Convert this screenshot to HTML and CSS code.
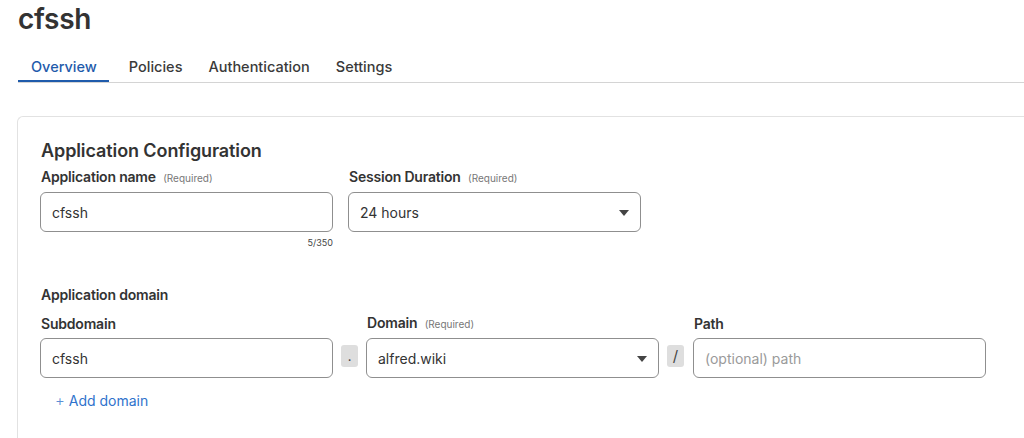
FILE: index.html
```html
<!DOCTYPE html>
<html>
<head>
<meta charset="utf-8">
<link rel="stylesheet" href="styles.css">
</head>
<body>
<div class="page">
  <h1 class="title">cfssh</h1>
  <nav class="tabs">
    <a class="tab active">Overview</a>
    <a class="tab">Policies</a>
    <a class="tab">Authentication</a>
    <a class="tab">Settings</a>
  </nav>
  <section class="card">
    <h2 class="card-title">Application Configuration</h2>
    <div class="row">
      <div class="field">
        <label class="label">Application name <span class="req">(Required)</span></label>
        <div class="input"><span class="value">cfssh</span></div>
        <div class="counter">5/350</div>
      </div>
      <div class="field">
        <label class="label">Session Duration <span class="req">(Required)</span></label>
        <div class="input select"><span class="value">24 hours</span><span class="caret"></span></div>
      </div>
    </div>
    <div class="group-title">Application domain</div>
    <div class="domain-row">
      <div class="field">
        <label class="label">Subdomain</label>
        <div class="input"><span class="value">cfssh</span></div>
      </div>
      <div class="sep">.</div>
      <div class="field">
        <label class="label">Domain <span class="req">(Required)</span></label>
        <div class="input select"><span class="value">alfred.wiki</span><span class="caret"></span></div>
      </div>
      <div class="sep slash">/</div>
      <div class="field">
        <label class="label">Path</label>
        <div class="input"><span class="placeholder">(optional) path</span></div>
      </div>
    </div>
    <a class="add-link"><span class="plus">+</span> Add domain</a>
  </section>
</div>
</body>
</html>
```
FILE: styles.css
```css
html, body {
  margin: 0;
  padding: 0;
  background: #ffffff;
  overflow: hidden;
}
body {
  font-family: Inter, "Helvetica Neue", Arial, sans-serif;
  color: #333333;
}
.page {
  padding-left: 17px;
}
.title {
  margin: 0 0 0 1px;
  padding-top: 2px;
  font-size: 28px;
  line-height: 34px;
  font-weight: 600;
  color: #333;
  letter-spacing: -0.3px;
}
.tabs {
  display: flex;
  margin-top: 15px;
  margin-left: 1px;
  border-bottom: 1px solid #d4d4d4;
  height: 31px;
}
.tab {
  display: block;
  font-size: 14.5px;
  font-weight: 500;
  color: #3a3a3a;
  padding: 0 13px;
  line-height: 31px;
  height: 30px;
}
.tab.active {
  color: #1f5bab;
  padding: 0 12px 0 13px;
  margin-right: 7px;
  border-bottom: 2px solid #1f5bab;
  height: 29px;
  margin-bottom: -1px;
}
.card {
  margin-top: 33px;
  border: 1px solid #e2e2e2;
  border-right: none;
  border-radius: 6px 0 0 0;
  padding: 22px 0 24px 22px;
  min-height: 400px;
}
.card-title {
  margin: 0 0 0 1px;
  font-size: 18px;
  line-height: 24px;
  font-weight: 600;
  color: #333;
  letter-spacing: -0.1px;
}
.row {
  display: flex;
  gap: 15px;
  margin-top: 5px;
}
.field {
  width: 293px;
  display: flex;
  flex-direction: column;
}
.label {
  display: block;
  margin-left: 1px;
  font-size: 14px;
  line-height: 18px;
  font-weight: 600;
  color: #333;
  margin-bottom: 5px;
  letter-spacing: -0.2px;
  white-space: nowrap;
}
.req {
  font-size: 10px;
  font-weight: 400;
  color: #777;
  margin-left: 4px;
  letter-spacing: 0;
}
.input {
  box-sizing: border-box;
  height: 40px;
  border: 1px solid #8f8f8f;
  border-radius: 6px;
  display: flex;
  align-items: center;
  padding: 0 11px;
  font-size: 14px;
  color: #333;
}
.select {
  justify-content: space-between;
  padding-right: 11px;
}
.caret {
  width: 0;
  height: 0;
  border-left: 5px solid transparent;
  border-right: 5px solid transparent;
  border-top: 6px solid #444;
  margin-top: 1px;
}
.placeholder {
  color: #9a9a9a;
}
.counter {
  text-align: right;
  font-size: 9px;
  line-height: 12px;
  margin-top: 5px;
  color: #444;
}
.group-title {
  margin-top: 37px;
  margin-left: 1px;
  font-size: 14px;
  line-height: 18px;
  font-weight: 600;
  color: #333;
  letter-spacing: -0.2px;
}
.domain-row {
  display: flex;
  align-items: flex-end;
  margin-top: 10px;
}
.sep {
  box-sizing: border-box;
  width: 17px;
  height: 22px;
  margin: 0 8px 11px 8px;
  background: #dedede;
  border-radius: 3px;
  font-size: 13px;
  line-height: 22px;
  text-align: center;
  color: #444;
}
.sep.slash {
  font-size: 15px;
  margin-right: 9px;
}
.add-link {
  display: inline-block;
  margin-top: 13px;
  margin-left: 15px;
  font-size: 14px;
  line-height: 20px;
  color: #2f73cc;
}
.plus {
  font-weight: 300;
  font-size: 15px;
  color: #5a8fd6;
}
```
